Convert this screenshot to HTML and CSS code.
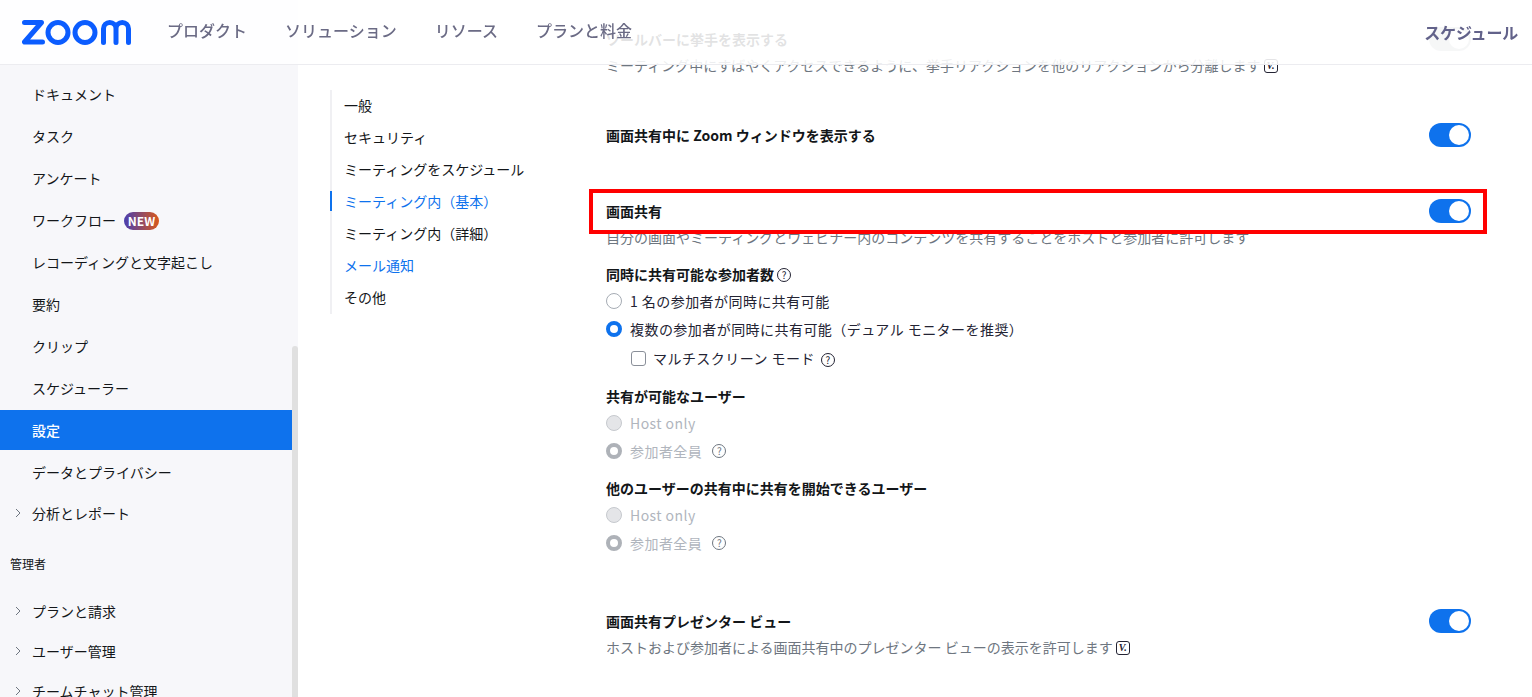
FILE: index.html
```html
<!DOCTYPE html>
<html lang="ja">
<head>
<meta charset="utf-8">
<title>Zoom 設定</title>
<link rel="stylesheet" href="styles.css">
</head>
<body>
<header class="topbar">
  <svg class="logo" viewBox="0 0 109 25" width="109" height="25" fill="none" stroke="#0b5cff" stroke-width="5" aria-label="zoom">
    <path d="M2.5 2.5H19.5L2.5 22H20.5" stroke-linejoin="round" stroke-linecap="round"/>
    <circle cx="36" cy="12.5" r="10"/>
    <circle cx="63" cy="12.5" r="10"/>
    <path d="M81.5 22.5V8.75A6.25 6.25 0 0 1 94 8.75V22.5M94 8.75A6.25 6.25 0 0 1 106.5 8.75V22.5" stroke-linecap="round"/>
  </svg>
  <nav class="topnav">
    <span>プロダクト</span>
    <span>ソリューション</span>
    <span>リソース</span>
    <span>プランと料金</span>
  </nav>
  <span class="schedule">スケジュール</span>
</header>

<div class="page">
  <aside class="sidebar">
    <div class="side-item">ドキュメント</div>
    <div class="side-item">タスク</div>
    <div class="side-item">アンケート</div>
    <div class="side-item">ワークフロー<span class="badge">NEW</span></div>
    <div class="side-item">レコーディングと文字起こし</div>
    <div class="side-item">要約</div>
    <div class="side-item">クリップ</div>
    <div class="side-item">スケジューラー</div>
    <div class="side-item active">設定</div>
    <div class="side-item">データとプライバシー</div>
    <div class="side-item group first"><svg class="chev" viewBox="0 0 6 10" width="6" height="10"><path d="M1 1l4 4-4 4"/></svg>分析とレポート</div>
    <div class="side-label">管理者</div>
    <div class="side-item group"><svg class="chev" viewBox="0 0 6 10" width="6" height="10"><path d="M1 1l4 4-4 4"/></svg>プランと請求</div>
    <div class="side-item group"><svg class="chev" viewBox="0 0 6 10" width="6" height="10"><path d="M1 1l4 4-4 4"/></svg>ユーザー管理</div>
    <div class="side-item group"><svg class="chev" viewBox="0 0 6 10" width="6" height="10"><path d="M1 1l4 4-4 4"/></svg>チームチャット管理</div>
    <div class="scroll-thumb"></div>
  </aside>

  <main class="main">
    <nav class="subnav">
      <a>一般</a>
      <a>セキュリティ</a>
      <a>ミーティングをスケジュール</a>
      <a class="current">ミーティング内（基本）</a>
      <a>ミーティング内（詳細）</a>
      <a class="link">メール通知</a>
      <a>その他</a>
    </nav>

    <section class="settings">
      <div class="row"><h3 class="title">ツールバーに挙手を表示する</h3><span class="toggle muted"></span></div>
      <p class="desc">ミーティング中にすばやくアクセスできるように、挙手リアクションを他のリアクションから分離します<span class="v">V.</span></p>

      <div class="row gap-49"><h3 class="title">画面共有中に Zoom ウィンドウを表示する</h3><span class="toggle"></span></div>

      <div class="row gap-56 marked"><h3 class="title">画面共有</h3><span class="toggle"></span></div>
      <p class="desc">自分の画面やミーティングとウェビナー内のコンテンツを共有することをホストと参加者に許可します</p>

      <h4 class="sub gap-16">同時に共有可能な参加者数<span class="help"></span></h4>
      <div class="opt gap-7"><span class="radio"></span>1 名の参加者が同時に共有可能</div>
      <div class="opt gap-8"><span class="radio on"></span>複数の参加者が同時に共有可能（デュアル モニターを推奨）</div>
      <div class="opt gap-9 nested"><span class="check"></span>マルチスクリーン モード<span class="help wide"></span></div>

      <h4 class="sub gap-18">共有が可能なユーザー</h4>
      <div class="opt gap-7 off"><span class="radio"></span>Host only</div>
      <div class="opt gap-8 off"><span class="radio on"></span>参加者全員<span class="help wide"></span></div>

      <h4 class="sub gap-17">他のユーザーの共有中に共有を開始できるユーザー</h4>
      <div class="opt gap-7 off"><span class="radio"></span>Host only</div>
      <div class="opt gap-8 off"><span class="radio on"></span>参加者全員<span class="help wide"></span></div>

      <div class="row gap-58"><h3 class="title">画面共有プレゼンター ビュー</h3><span class="toggle"></span></div>
      <p class="desc">ホストおよび参加者による画面共有中のプレゼンター ビューの表示を許可します<span class="v">V.</span></p>
    </section>
  </main>
</div>
</body>
</html>
```

FILE: styles.css
```css
*, *::before, *::after { box-sizing: border-box; }

html, body {
  margin: 0;
  height: 697px;
  overflow: hidden;
  background: #fff;
  font-family: "Noto Sans CJK JP", "Noto Sans", sans-serif;
  font-size: 14px;
  line-height: 20px;
  color: #131619;
}

/* top bar overlays the scrolled page */
.topbar {
  position: fixed;
  top: 0;
  left: 0;
  right: 0;
  height: 65px;
  z-index: 5;
  display: flex;
  align-items: center;
  padding: 0 14px 0 22px;
  background: rgba(255, 255, 255, .88);
  border-bottom: 1px solid #ececf0;
}
.logo { flex: none; }
.topnav {
  display: flex;
  gap: 38px;
  margin: 0 0 4px 36px;
  font-size: 16px;
  font-weight: 500;
  color: #6b6b85;
}
.schedule {
  margin-left: auto;
  font-size: 16px;
  font-weight: 700;
  color: #62628a;
  letter-spacing: -.2px;
}

.page { display: flex; height: 697px; }

/* sidebar */
.sidebar {
  position: relative;
  flex: none;
  width: 298px;
  height: 697px;
  overflow: hidden;
  padding: 74px 6px 0 0;
  background: #f7f7fa;
}
.side-item {
  display: flex;
  align-items: center;
  height: 40px;
  margin-bottom: 2px;
  padding-left: 32px;
  white-space: nowrap;
}
.side-item.active { background: #0e72ed; color: #fff; font-weight: 500; }
.side-item.group { padding-left: 15px; margin-bottom: 0; }
.side-item.first { margin-top: -1px; }
.chev { margin-right: 11px; fill: none; stroke: #6e7680; stroke-width: 1; flex: none; }
.side-label {
  height: 58px;
  padding: 22px 0 0 10px;
  font-size: 12px;
  line-height: 18px;
}
.badge {
  width: 35px;
  height: 18px;
  margin: 2px 0 0 8px;
  border-radius: 9px;
  background: linear-gradient(90deg, #4a3fb0, #d9581a);
  color: #fff;
  font-size: 12px;
  font-weight: 700;
  line-height: 17px;
  text-align: center;
}
.scroll-thumb {
  position: absolute;
  top: 346px;
  bottom: 0;
  right: 0;
  width: 6px;
  border-radius: 3px 3px 0 0;
  background: #e0e0e0;
}

/* main */
.main {
  flex: 1;
  display: flex;
  padding-left: 32px;
  min-width: 0;
}
.subnav {
  flex: none;
  align-self: flex-start;
  display: flex;
  flex-direction: column;
  width: 276px;
  margin-top: 90px;
  border-left: 2px solid #f0f0f3;
}
.subnav a {
  position: relative;
  height: 32px;
  padding: 5px 0 0 12px;
  white-space: nowrap;
}
.subnav .current, .subnav .link { color: #0e72ed; }
.subnav .current::before {
  content: "";
  position: absolute;
  left: -2px;
  top: 5px;
  width: 2px;
  height: 20px;
  background: #0e72ed;
}

.settings {
  flex: none;
  width: 865px;
  padding-top: 29px;
}
.row {
  display: flex;
  align-items: center;
  justify-content: space-between;
  height: 20px;
}
.title, .sub {
  margin: 0;
  font-size: 14px;
  font-weight: 700;
  line-height: 20px;
}
.sub { display: flex; align-items: center; }
.sub .help { margin-top: 2px; }
.desc {
  display: flex;
  align-items: center;
  margin: 7px 0 0;
  padding-bottom: 2px;
  line-height: 18px;
  color: #6e7680;
}
.toggle {
  position: relative;
  flex: none;
  width: 42px;
  height: 24px;
  border-radius: 12px;
  background: #0e72ed;
}
.toggle.muted { background: #b4b9bf; }
.toggle::after {
  content: "";
  position: absolute;
  top: 2px;
  right: 2px;
  width: 20px;
  height: 20px;
  border-radius: 50%;
  background: #fff;
}
.marked { position: relative; }
.marked::after {
  content: "";
  position: absolute;
  left: -17px;
  right: -16px;
  top: -12px;
  height: 45px;
  border: 4px solid #f00;
  pointer-events: none;
}
.gap-7 { margin-top: 7px; }
.gap-8 { margin-top: 8px; }
.gap-9 { margin-top: 9px; }
.gap-16 { margin-top: 16px; }
.gap-17 { margin-top: 17px; }
.gap-18 { margin-top: 18px; }
.gap-49 { margin-top: 49px; }
.gap-56 { margin-top: 56px; }
.gap-58 { margin-top: 58px; }

.opt {
  display: flex;
  align-items: center;
  height: 20px;
  color: #232333;
  letter-spacing: .45px;
}
.opt.off { color: #b0b5bd; }
.opt.nested { padding-left: 25px; }
.radio {
  flex: none;
  width: 16px;
  height: 16px;
  margin-right: 8px;
  border-radius: 50%;
  border: 1px solid #a6acb4;
  background: #fff;
}
.radio.on { border: 4px solid #0e72ed; }
.off .radio { background: #e4e5e8; border-color: #c6c9ce; }
.off .radio.on { background: #fff; border: 4px solid #aeb2b8; }
.check {
  flex: none;
  width: 15px;
  height: 15px;
  margin-right: 7px;
  border: 1px solid #8a8f99;
  border-radius: 3px;
  background: #fff;
}
.help {
  flex: none;
  width: 14px;
  height: 14px;
  margin-left: 3px;
  border: 1px solid currentColor;
  border-radius: 50%;
  color: #232333;
  font-size: 10px;
  font-weight: 400;
  letter-spacing: 0;
  line-height: 12px;
  text-align: center;
}
.help::before { content: "?"; }
.help.wide { margin: 4px 0 0 6px; }
.off .help.wide { color: #6e7680; margin: 0 0 0 10px; }
.v {
  flex: none;
  width: 14px;
  height: 14px;
  margin: 2px 0 0 3px;
  border: 1px solid #232333;
  border-radius: 3px;
  color: #232333;
  font-family: "Liberation Serif", serif;
  font-size: 10px;
  font-style: italic;
  font-weight: 700;
  line-height: 12px;
  text-align: center;
}
```
